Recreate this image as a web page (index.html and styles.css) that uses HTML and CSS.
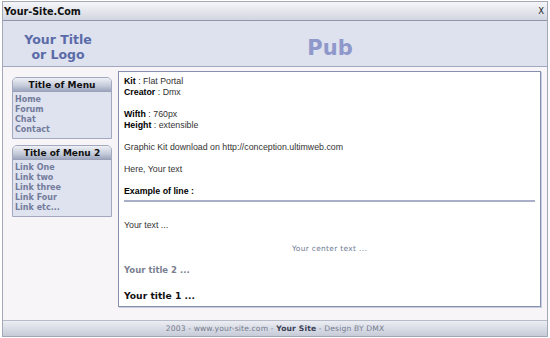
FILE: index.html
```html
<!DOCTYPE html>
<html>
<head>
<meta charset="utf-8">
<link rel="stylesheet" href="styles.css">
</head>
<body>
<div class="frame">
  <div class="topbar">
    <span class="site">Your-Site.Com</span>
    <span class="close">X</span>
  </div>
  <div class="header">
    <div class="logo">Your Title<br>or Logo</div>
    <div class="pub">Pub</div>
  </div>
  <div class="main">
    <div class="side">
      <div class="menu">
        <div class="menu-title">Title of Menu</div>
        <ul class="menu-links">
          <li>Home</li>
          <li>Forum</li>
          <li>Chat</li>
          <li>Contact</li>
        </ul>
      </div>
      <div class="menu">
        <div class="menu-title">Title of Menu 2</div>
        <ul class="menu-links">
          <li>Link One</li>
          <li>Link two</li>
          <li>Link three</li>
          <li>Link Four</li>
          <li>Link etc...</li>
        </ul>
      </div>
    </div>
    <div class="content">
      <p class="p1"><b>Kit</b> : Flat Portal<br><b>Creator</b> : Dmx</p>
      <p class="p"><b>Wifth</b> : 760px<br><b>Height</b> : extensible</p>
      <p class="p">Graphic Kit download on http://conception.ultimweb.com</p>
      <p class="p">Here, Your text</p>
      <p class="p"><b>Example of line :</b></p>
      <div class="rule"></div>
      <p class="yourtext">Your text ...</p>
      <p class="center">Your center text ...</p>
      <p class="title2">Your title 2 ...</p>
      <p class="title1">Your title 1 ...</p>
    </div>
  </div>
  <div class="footer">2003 - www.your-site.com - <b>Your Site</b> - Design BY DMX</div>
</div>
</body>
</html>
```

FILE: styles.css
```css
html, body {
  margin: 0;
  padding: 0;
  background: #ffffff;
}
.frame {
  margin: 1px 2px 0 2px;
  width: 546px;
  box-sizing: border-box;
  border: 1px solid #a3a7b6;
  font-family: "DejaVu Sans", Verdana, sans-serif;
}
.topbar {
  height: 18px;
  border-bottom: 1px solid #8e95ad;
  background: linear-gradient(#f5f6f9, #d2d6e0);
  display: flex;
  align-items: center;
  justify-content: space-between;
  padding: 0 3px 0 1px;
}
.site {
  font-weight: bold;
  font-size: 9.6px;
  color: #111;
}
.close {
  font-size: 8.5px;
  color: #222;
}
.header {
  height: 45px;
  background: #dee1ee;
  border-bottom: 1px solid #a2a8c0;
  display: flex;
  align-items: center;
}
.logo {
  width: 110px;
  text-align: center;
  font-weight: bold;
  font-size: 12.5px;
  line-height: 15px;
  color: #5a6ba8;
  padding-top: 6px;
}
.pub {
  flex: 1;
  text-align: center;
  font-weight: bold;
  font-size: 21px;
  color: #8e98ca;
  padding-top: 8px;
}
.main {
  height: 253px;
  box-sizing: border-box;
  background: #f8f5f8;
  padding: 4px 6px 13px 9px;
  display: flex;
  gap: 6px;
}
.side {
  width: 100px;
  padding-top: 6px;
  display: flex;
  flex-direction: column;
  gap: 6px;
}
.menu {
  border: 1px solid #a2a8bf;
  border-radius: 5px 5px 0 0;
  background: #dfe3ef;
}
.menu-title {
  height: 13px;
  line-height: 14px;
  border-radius: 4px 4px 0 0;
  background: linear-gradient(#eef0f5, #c4cad9 60%, #9ea7bf);
  border-bottom: 1px solid #9aa1b9;
  text-align: center;
  font-weight: bold;
  font-size: 9px;
  color: #111;
}
.menu-links {
  list-style: none;
  margin: 0;
  padding: 3px 2px 3px 2px;
}
.menu-links li {
  font-size: 8px;
  font-weight: bold;
  line-height: 10px;
  color: #737b9c;
}
.content {
  flex: 1;
  background: #fff;
  border: 1px solid #8890b0;
  box-shadow: 1px 1px 0 #c8cce0;
  padding: 4px 5px;
  font-family: "Liberation Sans", Arial, sans-serif;
  font-size: 8.8px;
  line-height: 11px;
  color: #333;
}
.content b {
  color: #000;
}
.content p {
  margin: 0;
}
.content .p {
  margin-top: 11px;
}
.rule {
  margin-top: 3px;
  height: 2px;
  background: #a9afc7;
}
.content .yourtext {
  margin-top: 18px;
}
.content .center {
  margin-top: 12px;
  text-align: center;
  font-family: "DejaVu Sans", Verdana, sans-serif;
  font-size: 7.4px;
  letter-spacing: 0.35px;
  color: #6e7a94;
}
.content .title2 {
  margin-top: 11px;
  font-family: "DejaVu Sans", Verdana, sans-serif;
  font-weight: bold;
  font-size: 8.5px;
  color: #7a8091;
}
.content .title1 {
  margin-top: 14px;
  font-family: "DejaVu Sans", Verdana, sans-serif;
  font-weight: bold;
  font-size: 9.2px;
  color: #111;
}
.footer {
  height: 15px;
  border-top: 1px solid #b6bbca;
  background: linear-gradient(#eceef3, #c6cbd8);
  text-align: center;
  font-size: 7.6px;
  letter-spacing: 0.15px;
  line-height: 15px;
  color: #757b8e;
}
.footer b {
  color: #3b4055;
}
```
